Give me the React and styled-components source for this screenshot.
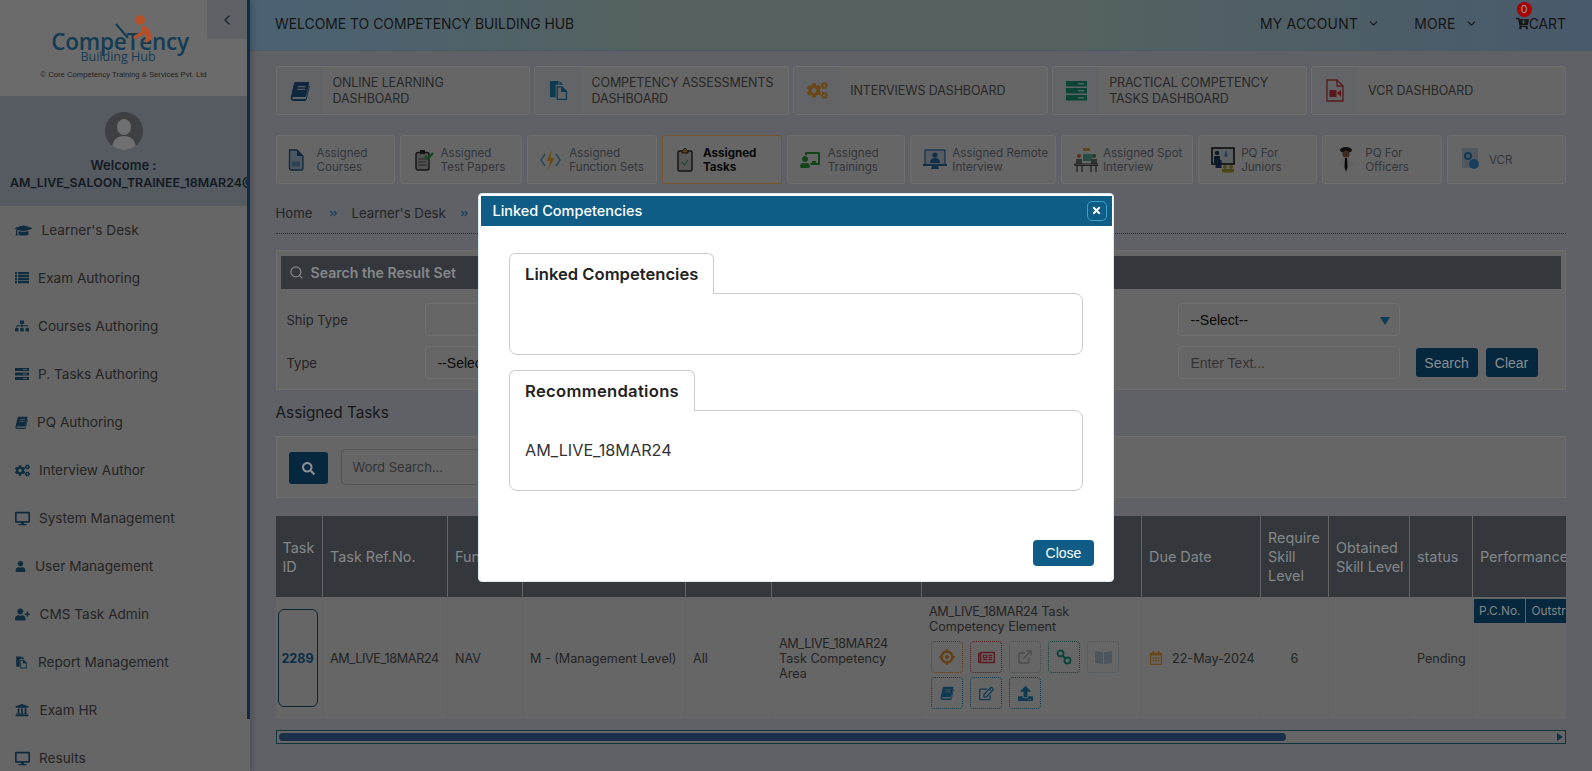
import React from "react";
import styled, { createGlobalStyle } from "styled-components";
import {
  FaGraduationCap, FaSitemap, FaCogs, FaDesktop, FaUser, FaUserPlus, FaUniversity,
  FaCartPlus, FaAngleDoubleRight, FaSearch, FaRegNewspaper, FaRegEdit, FaUpload,
  FaTimes, FaRegCalendarAlt, FaChalkboardTeacher
} from "react-icons/fa";
import { FiSearch, FiChevronDown, FiChevronLeft, FiExternalLink } from "react-icons/fi";

const sans = `Inter, "Open Sans", sans-serif`;
const arial = `"Liberation Sans", Arial, sans-serif`;

const GlobalStyle = createGlobalStyle`
  html, body { margin: 0; height: 771px; overflow: hidden; }
  * { box-sizing: border-box; }
  body { font-family: ${sans}; color: #1d1d1d; background: #5f6166; }
`;

const Page = styled.div`
  display: flex;
  height: 771px;
  overflow: hidden;
`;

/* the page behind the dialog is painted in its dimmed colours; icons keep
   their own colours and go through this filter */
const Dimmed = styled.span`
  display: inline-flex;
  align-items: center;
  justify-content: center;
  filter: brightness(0.44);
`;

/* ---- sidebar ---- */
const Sidebar = styled.aside`
  position: relative;
  flex: 0 0 250px;
  background: #666;
  box-shadow: 2px 0 6px rgba(0, 0, 0, 0.2);
  overflow: hidden;
  &::after {
    content: "";
    position: absolute;
    top: 0;
    right: 0;
    width: 3px;
    height: 719px;
    background: #0e2c48;
  }
`;

const LogoBlock = styled.div`
  position: relative;
  height: 96px;
  width: 247px;
  background: #6b6b6b;
  text-align: center;
`;

const LogoFigure = styled.svg`
  position: absolute;
  left: 112px;
  top: 12px;
`;

const LogoName = styled.div`
  padding: 29px 7px 0 0;
  font: 600 22.5px/26px "Open Sans", sans-serif;
  letter-spacing: -0.2px;
  color: #143c55;
`;

const LogoSub = styled.div`
  margin-top: -6px;
  padding-right: 11px;
  font: 400 12.5px/15px "Open Sans", sans-serif;
  color: #143c55;
`;

const LogoCopy = styled.div`
  margin-top: 6px;
  font: 400 7.7px/10px ${arial};
  color: #222;
`;

const CollapseButton = styled.div`
  position: absolute;
  top: 0;
  right: 0;
  width: 40px;
  height: 39px;
  display: flex;
  align-items: center;
  justify-content: center;
  background: #5e6165;
  color: #1a2430;
`;

const UserBlock = styled.div`
  width: 247px;
  height: 110px;
  padding-top: 16px;
  background: #555b61;
  text-align: center;
  white-space: nowrap;
  overflow: hidden;
`;

const Avatar = styled.svg`
  display: block;
  margin: 0 auto;
`;

const Welcome = styled.div`
  margin-top: 6px;
  font: 600 13px/18px ${sans};
  color: #141a22;
`;

const UserName = styled.div`
  font: 600 12.4px/18px ${sans};
  color: #141a22;
  text-align: left;
  padding-left: 10px;
`;

const MenuItem = styled.div`
  display: flex;
  align-items: center;
  height: 48px;
  padding-left: 15px;
  font: 400 13.6px/18px ${sans};
  color: #242424;
  white-space: nowrap;
`;

const MenuIcon = styled(Dimmed)`
  justify-content: flex-start;
  flex: 0 0 ${p => p.$width}px;
  color: #24668f;
`;

/* ---- main ---- */
const Main = styled.main`
  flex: 1;
  min-width: 0;
`;

const TopBar = styled.header`
  display: flex;
  align-items: center;
  height: 51px;
  padding: 0 26px 3px 25px;
  background: linear-gradient(90deg, #4a6274 0%, #556260 30%, #556260 60%, #485a6c 100%);
  border-bottom: 1px solid #4c5c66;
  font: 400 13.9px/18px ${sans};
  color: #151515;
  white-space: nowrap;
`;

const TopTitle = styled.div`
  flex: 1;
`;

const TopLink = styled.div`
  display: flex;
  align-items: center;
  gap: 9px;
  margin-left: ${p => p.$gap}px;
  letter-spacing: 0.25px;
`;

const Cart = styled.div`
  position: relative;
  display: flex;
  align-items: center;
  margin-left: 38px;
`;

const CartBadge = styled.span`
  position: absolute;
  left: 1px;
  top: -13px;
  width: 15px;
  height: 15px;
  border-radius: 50%;
  background: #a80000;
  color: #999;
  font: 400 11px/15px ${sans};
  text-align: center;
`;

const Content = styled.div`
  padding: 15px 26px 0 25.5px;
`;

const DashGrid = styled.div`
  display: grid;
  grid-template-columns: repeat(5, 1fr);
  gap: 4px;
`;

const DashCard = styled.div`
  display: flex;
  height: 49px;
  background: #666;
  border: 1px solid #6e6e6e;
  border-radius: 3px;
  overflow: hidden;
`;

const DashIcon = styled.div`
  flex: 0 0 46px;
  display: flex;
  align-items: center;
  justify-content: center;
  background: #626468;
`;

const DashLabel = styled.div`
  align-self: center;
  padding-left: 10px;
  font: 400 12.5px/16px ${sans};
  letter-spacing: -0.1px;
  color: #282828;
  white-space: nowrap;
`;

const TaskGrid = styled.div`
  display: grid;
  grid-template-columns: 119fr 122.6fr 129.5fr 119.6fr 118.5fr 145.5fr 132fr 119fr 119.5fr 119fr;
  gap: 5px;
  margin-top: 20px;
`;

const TaskCard = styled.div`
  display: flex;
  align-items: center;
  height: 49px;
  padding-left: ${p => p.$pad}px;
  gap: ${p => p.$gap}px;
  background: #666;
  border: 1px solid ${p => (p.$active ? "#78542a" : "#6e6e6e")};
  border-radius: 3px;
`;

const TaskLabel = styled.div`
  font: ${p => (p.$active ? 700 : 400)} 11.6px/14px ${sans};
  color: ${p => (p.$active ? "#080808" : "#33363b")};
  white-space: nowrap;
`;

const Breadcrumb = styled.nav`
  display: flex;
  align-items: flex-end;
  height: 50px;
  padding-bottom: 11px;
  border-bottom: 1px dotted #2a2a2a;
  font: 400 13.2px/18px ${sans};
  color: #242424;
`;

const Crumb = styled.span`
  margin-right: ${p => p.$gap}px;
`;

const CrumbSep = styled.span`
  display: flex;
  margin-bottom: 4px;
  color: #1f4360;
  margin-right: 13px;
`;

const Panel = styled.section`
  margin-top: ${p => p.$top}px;
  height: ${p => p.$height}px;
  padding: 5px 4px;
  background: #666;
  border: 1px solid #6e6e6e;
`;

const PanelHead = styled.div`
  display: flex;
  align-items: center;
  gap: 7px;
  height: 33px;
  padding-left: 8px;
  background: #34373b;
  font: 600 14.1px/18px ${sans};
  color: #85888b;
`;

const FilterRow = styled.div`
  display: grid;
  grid-template-columns: 138px 222px 1fr 222px 161.5px;
  align-items: center;
  height: 43px;
  padding-left: 6px;
  font: 400 13px/18px ${sans};
  color: #242424;
`;

const FilterRows = styled.div`
  margin-top: 9px;
`;

const Field = styled.div`
  position: relative;
  display: flex;
  align-items: center;
  height: 33px;
  padding-left: 12px;
  border: 1px solid #6f7072;
  border-radius: 4px;
  grid-column: ${p => p.$col};
  font: 400 14px/18px ${arial};
  color: ${p => (p.$placeholder ? "#333" : "#0a0a0a")};
`;

const SelectArrow = styled.span`
  position: absolute;
  right: 9px;
  top: 13px;
  border-left: 5px solid transparent;
  border-right: 5px solid transparent;
  border-top: 8px solid #0a3c54;
`;

const Buttons = styled.div`
  display: flex;
  gap: 8px;
  padding-left: 16px;
`;

const DarkButton = styled.div`
  display: flex;
  align-items: center;
  justify-content: center;
  width: ${p => p.$width}px;
  height: ${p => p.$height || 29}px;
  background: #05283e;
  border-radius: 3px;
  font: 400 14px/18px ${arial};
  color: #8a8f93;
`;

const SectionTitle = styled.h2`
  margin: 13px 0 14px;
  font: 400 15.3px/19px ${sans};
  color: #181818;
`;

const WordRow = styled.div`
  display: flex;
  align-items: center;
  gap: 13px;
  height: 36px;
  margin-top: 8px;
  padding-left: 8px;
`;

const WordInput = styled.div`
  display: flex;
  align-items: center;
  width: 300px;
  height: 36px;
  margin-top: -2px;
  padding-left: 11px;
  border: 1px solid #555;
  border-radius: 4px;
  font: 400 13px/18px ${sans};
  color: #333;
`;

/* ---- table ---- */
const TableWrap = styled.div`
  margin-top: 18px;
  overflow: hidden;
`;

const Table = styled.table`
  table-layout: fixed;
  width: 1400px;
  border-collapse: collapse;
`;

const Th = styled.th`
  width: ${p => p.$width}px;
  height: 81px;
  padding: 0 4px 0 7px;
  background: #34373b;
  border-right: 1px solid #646464;
  font: 400 14.4px/19px ${sans};
  color: #85888b;
  text-align: left;
  white-space: ${p => (p.$nowrap ? "nowrap" : "normal")};
`;

const Td = styled.td`
  height: 122px;
  padding: ${p => p.$padding || "0 7px"};
  background: #666;
  border-right: 1px dotted #606060;
  font: 400 12.6px/15px ${sans};
  color: #242424;
  vertical-align: ${p => p.$align || "middle"};
  text-align: ${p => (p.$center ? "center" : "left")};
`;

const Code = styled.span`
  letter-spacing: -0.35px;
`;

const IdBox = styled.div`
  display: flex;
  align-items: center;
  justify-content: center;
  width: 40px;
  height: 98px;
  margin-left: -5px;
  border: 1px solid #0d2533;
  border-radius: 6px;
  font: 700 12.6px/15px ${sans};
  color: #0a2e46;
`;

const DueDate = styled.div`
  display: flex;
  align-items: center;
  gap: 9px;
  white-space: nowrap;
`;

const ActionGrid = styled.div`
  display: flex;
  flex-wrap: wrap;
  gap: 4px 7px;
  margin-top: 7px;
  padding-left: 2px;
`;

const ActionButton = styled(Dimmed)`
  width: 32px;
  height: 32px;
  border: 1px dotted ${p => p.$color};
  border-radius: 4px;
  color: ${p => p.$color};
`;

const SubHead = styled.div`
  display: flex;
  white-space: nowrap;
`;

const SubCell = styled.div`
  height: 24px;
  padding: 0 5px;
  background: #05283e;
  border-right: 1px solid #646464;
  font: 400 11.8px/24px ${sans};
  color: #85888b;
`;

const ScrollTrack = styled.div`
  position: relative;
  height: 14px;
  margin-top: 11px;
  padding: 2px;
  background: #666;
  border: 1px solid #0d3540;
`;

const ScrollThumb = styled.div`
  width: 1007px;
  height: 8px;
  background: #1a2f4a;
  border-radius: 4px;
`;

const ScrollArrow = styled.span`
  position: absolute;
  right: 2px;
  top: 2px;
  border-top: 4px solid transparent;
  border-bottom: 4px solid transparent;
  border-left: 6px solid #0d3545;
`;

/* ---- modal ---- */
const Backdrop = styled.div`
  position: fixed;
  inset: 0;
  display: flex;
  justify-content: center;
  padding-top: 193px;
`;

const Dialog = styled.div`
  width: 636px;
  height: 389px;
  padding: 1.5px;
  background: #fff;
  border: 1px solid #dcebf2;
  border-radius: 4px;
`;

const DialogHead = styled.div`
  display: flex;
  align-items: center;
  justify-content: space-between;
  height: 30px;
  padding: 0 5px 0 12px;
  background: #0f5d87;
  font: 500 14.5px/18px ${sans};
  color: #fff;
`;

const DialogClose = styled.div`
  display: flex;
  align-items: center;
  justify-content: center;
  width: 20px;
  height: 20px;
  border: 1px solid #3aa2c8;
  border-radius: 5px;
  background: #0f5d87;
  color: #fff;
`;

const DialogBody = styled.div`
  padding: 27px 28.5px 0;
`;

const Tab = styled.div`
  position: relative;
  z-index: 1;
  display: inline-block;
  height: 41px;
  margin-bottom: -1px;
  padding: 0 15px;
  background: #fff;
  border: 1px solid #ccc;
  border-bottom: 0;
  border-radius: 6px 6px 0 0;
  font: 600 16.6px/40px ${sans};
  letter-spacing: ${p => p.$spacing || 0}px;
  color: #222;
`;

const TabBody = styled.div`
  display: flex;
  align-items: center;
  height: ${p => p.$height}px;
  margin-bottom: 15px;
  padding-left: 15px;
  border: 1px solid #ccc;
  border-radius: 0 8px 8px 8px;
  font: 400 16.2px/20px ${sans};
  color: #333;
`;

const DialogFoot = styled.div`
  display: flex;
  justify-content: flex-end;
  padding: 34px 17.5px 0 0;
`;

const CloseButton = styled.div`
  display: flex;
  align-items: center;
  justify-content: center;
  width: 61px;
  height: 26px;
  background: #0f5d87;
  border-radius: 4px;
  font: 400 14px/18px ${arial};
  color: #fff;
`;

/* ---- drawn icons ---- */
const BookIcon = ({ size = 14, color = "currentColor" }) => (
  <svg width={size} height={size} viewBox="0 0 20 20" fill={color}>
    <path d="M6 1h12.5c.6 0 .9.5.7 1.1l-3.2 13.2c-.1.5-.5.7-1 .7H3.4c-.8 0-1.1.8-.9 1.2.2.5.6.8 1.2.8h11.5c.5 0 .8-.3.9-.7L19 4.4l.8.8-3 12.9c-.2.9-1 1.9-2 1.9H3.6C1.6 20 .2 18 .8 16L3.9 2.7C4.1 1.8 5 1 6 1z" />
    <path d="M7.6 5h8v1.2h-8zM7 7.8h8V9H7z" fill="#ccc" />
  </svg>
);

const FilesIcon = ({ size = 14, color = "currentColor" }) => (
  <svg width={size} height={size} viewBox="0 0 20 22" fill={color}>
    <path d="M1 1h9v4H7v13H1z" />
    <path d="M8 6.500h6l5 5V21H8zm1.400 1.400v11.700h8.200v-7h-5V7.900z" />
    <path d="M11 1l4 4h-4z" />
  </svg>
);

const ListIcon = () => (
  <svg width="14" height="12" viewBox="0 0 14 12" fill="currentColor">
    {[0, 3, 6, 9].map(y => (
      <g key={y}>
        <rect y={y} width="2" height="2.300" />
        <rect x="3" y={y} width="11" height="2.300" />
      </g>
    ))}
  </svg>
);

const TaskBars = () => (
  <svg width="14" height="12" viewBox="0 0 14 12" fill="currentColor">
    <rect width="14" height="3" />
    <rect y="4.500" width="14" height="3" />
    <rect y="9" width="14" height="3" />
    <rect x="8" y="1" width="4" height="1" fill="#ccc" />
    <rect x="8" y="5.500" width="4" height="1" fill="#ccc" />
    <rect x="8" y="10" width="4" height="1" fill="#ccc" />
  </svg>
);

const ServerBars = () => (
  <svg width="21" height="21" viewBox="0 0 21 21">
    {[1, 8, 15].map(y => (
      <g key={y}>
        <rect x="0" y={y} width="21" height="5.500" fill="#1c9a80" />
        <rect x="12" y={y + 2.2} width="6" height="1.200" fill="#bfe" />
      </g>
    ))}
  </svg>
);

const VideoDoc = () => (
  <svg width="18" height="23" viewBox="0 0 18 23" fill="none">
    <path d="M1 1h10l6 6v15H1z" stroke="#c83a3a" strokeWidth="1.300" />
    <path d="M11 1v6h6" stroke="#c83a3a" strokeWidth="1.300" />
    <rect x="3.500" y="11" width="7" height="7" fill="#c83a3a" />
    <path d="M11 14l4-3v7z" fill="#c83a3a" />
  </svg>
);

const DocIcon = () => (
  <svg width="16" height="22" viewBox="0 0 16 22" fill="none">
    <path d="M1.500 1h7.500l6 6v12.500a1.500 1.500 0 0 1-1.500 1.500h-10.500a1.500 1.500 0 0 1-1.500-1.500z" fill="#a9c4dc" stroke="#245a8c" strokeWidth="1.300" />
    <path d="M9 1l6 6H9z" fill="#245a8c" />
    <rect x="4" y="12.500" width="8" height="5" fill="#6a96bc" />
  </svg>
);

const ClipCheckIcon = () => (
  <svg width="19" height="22" viewBox="0 0 19 22" fill="none">
    <rect x="1" y="3.500" width="13" height="17.500" rx="2" fill="#b8b8b8" stroke="#2e2e2e" strokeWidth="1.400" />
    <rect x="5" y="1" width="5" height="4" fill="#2e2e2e" />
    <path d="M3.500 10h8M3.500 13h8M3.500 16h8" stroke="#5a5a5a" strokeWidth="1.200" />
    <path d="M10 7l3 3 5-6" stroke="#28a040" strokeWidth="2" />
  </svg>
);

const FunctionIcon = () => (
  <svg width="21" height="22" viewBox="0 0 21 22" fill="none">
    <path d="M5 5l-4 6 4 6M16 5l4 6-4 6" stroke="#6a9cc4" strokeWidth="1.500" />
    <path d="M12 1l-5.500 11h3.500l-2 9 6.500-12h-4z" fill="#f0b020" />
  </svg>
);

const TaskClipIcon = () => (
  <svg width="16" height="25" viewBox="0 0 16 25" fill="none">
    <rect x="1" y="4" width="14" height="20" rx="1.500" fill="#c8c8c8" stroke="#2c2c2c" strokeWidth="1.500" />
    <path d="M5 4l3-3 3 3v2H5z" fill="#d88a30" stroke="#2c2c2c" />
    <path d="M5 15l2.500 3 3.500-5" stroke="#4aa878" strokeWidth="1.200" />
  </svg>
);

const RemoteIcon = () => (
  <svg width="24" height="22" viewBox="0 0 24 22" fill="none">
    <rect x="2" y="1" width="20" height="15" fill="#c6d2e0" stroke="#2a6aa8" strokeWidth="1.200" />
    <circle cx="12" cy="6" r="2.600" fill="#2a6aa8" />
    <path d="M7 14c0-4 2.500-5 5-5s5 1 5 5z" fill="#2a6aa8" />
    <path d="M0 15h24v2H0zM9 17h6l1 3H8z" fill="#2a6aa8" />
  </svg>
);

const SpotIcon = () => (
  <svg width="24" height="26" viewBox="0 0 24 26" fill="none">
    <rect x="9" y="1" width="7" height="3" fill="#d8a040" />
    <rect x="9" y="7" width="9" height="7" fill="#5ab0a0" />
    <circle cx="5" cy="9" r="2" fill="#c86a40" />
    <circle cx="20" cy="9" r="2" fill="#3a8060" />
    <path d="M2 12h6v5H2zM17 12h6v5h-6z" fill="#70786a" />
    <path d="M1 17h23v1.500H1zM3 18v7M8 18v7M17 18v7M22 18v7" stroke="#444" strokeWidth="1.200" />
  </svg>
);

const JuniorIcon = () => (
  <svg width="24" height="26" viewBox="0 0 24 26" fill="none">
    <rect x="1" y="1" width="22" height="16" fill="#d2dae2" stroke="#1c1c1c" strokeWidth="1.600" />
    <circle cx="6" cy="6" r="2.200" fill="#1c3a60" />
    <path d="M3 9h6v4h1.500v8H4.500v-5H3z" fill="#1c3a60" />
    <path d="M15 3l1.500 5a1.600 1.600 0 1 1-3 0z" fill="#4a90c8" />
    <circle cx="14" cy="20" r="2" fill="#a8a030" />
    <circle cx="20" cy="20" r="2" fill="#a8a030" />
    <rect x="11" y="22" width="12" height="3.500" fill="#a8a030" />
  </svg>
);

const OfficerIcon = () => (
  <svg width="20" height="28" viewBox="0 0 20 28" fill="none">
    <ellipse cx="10" cy="4" rx="6" ry="3" fill="#222" />
    <circle cx="10" cy="8" r="3.600" fill="#8a6040" />
    <path d="M2 19l5-7h6l5 7-2.500 1.500L13 17v6H7v-6l-2.500 3.500z" fill="#ddd" />
    <path d="M9 12h2l.5 9-1.500 5-1.500-5z" fill="#111" />
  </svg>
);

const VcrIcon = () => (
  <svg width="20" height="25" viewBox="0 0 20 25" fill="none">
    <rect x="1" y="1" width="16" height="20" rx="1" fill="#b8c8d8" />
    <circle cx="7" cy="9" r="3" stroke="#2a80c0" strokeWidth="2" />
    <circle cx="13" cy="17" r="5" fill="#3a90d0" />
  </svg>
);

const TargetIcon = () => (
  <svg width="16" height="16" viewBox="0 0 16 16" fill="none" stroke="#e09030">
    <circle cx="8" cy="8" r="5.500" strokeWidth="2.400" />
    <path d="M8 5.500l2.500 2.500L8 10.500 5.500 8z" fill="#e09030" stroke="none" />
    <path d="M8 0v3M8 13v3M0 8h3M13 8h3" strokeWidth="1.600" />
  </svg>
);

const ChainIcon = () => (
  <svg width="16" height="16" viewBox="0 0 16 16" fill="none" stroke="#1c9a86" strokeWidth="1.900">
    <circle cx="4.500" cy="4.500" r="3" />
    <circle cx="11.500" cy="11.500" r="3" />
    <path d="M6.500 6.500l3 3" />
  </svg>
);

const PanelIcon = () => (
  <svg width="17" height="14" viewBox="0 0 17 14" fill="currentColor">
    <path d="M0 1l8 1v12l-8-1zM9 2l8-1v12l-8 1z" />
  </svg>
);

const menu = [
  { label: "Learner's Desk", icon: <FaGraduationCap size={17} />, width: 26.5 },
  { label: "Exam Authoring", icon: <ListIcon />, width: 23 },
  { label: "Courses Authoring", icon: <FaSitemap size={14} />, width: 23 },
  { label: "P. Tasks Authoring", icon: <TaskBars />, width: 23 },
  { label: "PQ Authoring", icon: <BookIcon size={13} />, width: 22 },
  { label: "Interview Author", icon: <FaCogs size={15} />, width: 24 },
  { label: "System Management", icon: <FaDesktop size={15} />, width: 24 },
  { label: "User Management", icon: <FaUser size={11} />, width: 20 },
  { label: "CMS Task Admin", icon: <FaUserPlus size={15} />, width: 24.5 },
  { label: "Report Management", icon: <FilesIcon size={13} />, width: 23 },
  { label: "Exam HR", icon: <FaUniversity size={14} />, width: 24.5 },
  { label: "Results", icon: <FaDesktop size={15} />, width: 24 }
];

const dashboards = [
  { lines: ["ONLINE LEARNING", "DASHBOARD"], icon: <BookIcon size={20} color="#245a90" /> },
  { lines: ["COMPETENCY ASSESSMENTS", "DASHBOARD"], icon: <FilesIcon size={21} color="#1f86ba" /> },
  { lines: ["INTERVIEWS DASHBOARD"], icon: <FaCogs size={21} color="#f0a030" /> },
  { lines: ["PRACTICAL COMPETENCY", "TASKS DASHBOARD"], icon: <ServerBars /> },
  { lines: ["VCR DASHBOARD"], icon: <VideoDoc /> }
];

const tasks = [
  { lines: ["Assigned", "Courses"], icon: <DocIcon />, pad: 11, gap: 13 },
  { lines: ["Assigned", "Test Papers"], icon: <ClipCheckIcon />, pad: 14, gap: 7 },
  { lines: ["Assigned", "Function Sets"], icon: <FunctionIcon />, pad: 12, gap: 8 },
  { lines: ["Assigned", "Tasks"], icon: <TaskClipIcon />, pad: 14, gap: 10, active: true },
  { lines: ["Assigned", "Trainings"], icon: <FaChalkboardTeacher size={20} color="#2e9a3a" />, pad: 12, gap: 8 },
  { lines: ["Assigned Remote", "Interview"], icon: <RemoteIcon />, pad: 12, gap: 5 },
  { lines: ["Assigned Spot", "Interview"], icon: <SpotIcon />, pad: 12, gap: 5 },
  { lines: ["PQ For", "Juniors"], icon: <JuniorIcon />, pad: 12, gap: 6 },
  { lines: ["PQ For", "Officers"], icon: <OfficerIcon />, pad: 13, gap: 9 },
  { lines: ["VCR"], icon: <VcrIcon />, pad: 13, gap: 8 }
];

const columns = [
  { label: "Task ID", width: 47 },
  { label: "Task Ref.No.", width: 125 },
  { label: "Function", width: 75 },
  { label: "Level", width: 163 },
  { label: "Type", width: 86 },
  { label: "Task Competency Area", width: 150 },
  { label: "Task Competency Element", width: 220 },
  { label: "Due Date", width: 119 },
  { label: "Require Skill Level", width: 68 },
  { label: "Obtained Skill Level", width: 81 },
  { label: "status", width: 63 },
  { label: "Performance", width: 203, nowrap: true }
];

const actions = [
  { color: "#e09030", icon: <TargetIcon /> },
  { color: "#d03848", icon: <FaRegNewspaper size={17} /> },
  { color: "#a8acb0", icon: <FiExternalLink size={16} /> },
  { color: "#1c9a86", icon: <ChainIcon /> },
  { color: "#b0c4d4", icon: <PanelIcon /> },
  { color: "#1f86ba", icon: <BookIcon size={14} /> },
  { color: "#1f86ba", icon: <FaRegEdit size={15} /> },
  { color: "#1f86ba", icon: <FaUpload size={15} /> }
];

const App = () => (
  <>
    <GlobalStyle />
    <Page>
      <Sidebar>
        <LogoBlock>
          <LogoFigure width="50" height="38" viewBox="0 0 50 38" fill="none">
            <path d="M4 12l12 14" stroke="#143c55" strokeWidth="2" />
            <circle cx="28" cy="8" r="5" fill="#b5502a" />
            <path d="M30 14c7 0 10 6 9 14l-5 3-1-9-10 5c-2 0-2-2-1-3l8-5z" fill="#b5502a" />
          </LogoFigure>
          <LogoName>CompeTency</LogoName>
          <LogoSub>Building Hub</LogoSub>
          <LogoCopy>© Core Competency Training &amp; Services Pvt. Ltd</LogoCopy>
          <CollapseButton><FiChevronLeft size={16} /></CollapseButton>
        </LogoBlock>
        <UserBlock>
          <Avatar width="38" height="38" viewBox="0 0 38 38">
            <defs><clipPath id="avatarClip"><circle cx="19" cy="19" r="19" /></clipPath></defs>
            <circle cx="19" cy="19" r="19" fill="#3e4043" />
            <g clipPath="url(#avatarClip)" fill="#707070">
              <ellipse cx="19" cy="15" rx="7" ry="8" />
              <path d="M7 38c0-10 5-14 12-14s12 4 12 14z" />
            </g>
          </Avatar>
          <Welcome>Welcome :</Welcome>
          <UserName>AM_LIVE_SALOON_TRAINEE_18MAR24@</UserName>
        </UserBlock>
        {menu.map(item => (
          <MenuItem key={item.label}>
            <MenuIcon $width={item.width}>{item.icon}</MenuIcon>
            {item.label}
          </MenuItem>
        ))}
      </Sidebar>

      <Main>
        <TopBar>
          <TopTitle>WELCOME TO COMPETENCY BUILDING HUB</TopTitle>
          <TopLink $gap={0}>MY ACCOUNT <FiChevronDown size={13} /></TopLink>
          <TopLink $gap={34}>MORE <FiChevronDown size={13} /></TopLink>
          <Cart>
            <FaCartPlus size={13} />
            <CartBadge>0</CartBadge>
            <span>CART</span>
          </Cart>
        </TopBar>

        <Content>
          <DashGrid>
            {dashboards.map(d => (
              <DashCard key={d.lines.join()}>
                <DashIcon><Dimmed>{d.icon}</Dimmed></DashIcon>
                <DashLabel>
                  {d.lines.map(line => <div key={line}>{line}</div>)}
                </DashLabel>
              </DashCard>
            ))}
          </DashGrid>

          <TaskGrid>
            {tasks.map(t => (
              <TaskCard key={t.lines.join()} $pad={t.pad} $gap={t.gap} $active={t.active}>
                <Dimmed>{t.icon}</Dimmed>
                <TaskLabel $active={t.active}>
                  {t.lines.map(line => <div key={line}>{line}</div>)}
                </TaskLabel>
              </TaskCard>
            ))}
          </TaskGrid>

          <Breadcrumb>
            <Crumb $gap={17}>Home</Crumb>
            <CrumbSep><FaAngleDoubleRight size={9} /></CrumbSep>
            <Crumb $gap={14}>Learner's Desk</Crumb>
            <CrumbSep><FaAngleDoubleRight size={9} /></CrumbSep>
            <Crumb $gap={0}>Assigned Tasks</Crumb>
          </Breadcrumb>

          <Panel $top={16} $height={140}>
            <PanelHead><FiSearch size={15} /> Search the Result Set</PanelHead>
            <FilterRows>
              <FilterRow>
                <span>Ship Type</span>
                <Field />
                <Field $col={4}>--Select--<SelectArrow /></Field>
              </FilterRow>
              <FilterRow>
                <span>Type</span>
                <Field>--Select--</Field>
                <Field $col={4} $placeholder>Enter Text...</Field>
                <Buttons>
                  <DarkButton $width={62}>Search</DarkButton>
                  <DarkButton $width={52}>Clear</DarkButton>
                </Buttons>
              </FilterRow>
            </FilterRows>
          </Panel>

          <SectionTitle>Assigned Tasks</SectionTitle>

          <Panel $top={0} $height={62}>
            <WordRow>
              <DarkButton $width={39} $height={32}><FaSearch size={13} /></DarkButton>
              <WordInput>Word Search...</WordInput>
            </WordRow>
          </Panel>

          <TableWrap>
            <Table>
              <thead>
                <tr>
                  {columns.map(c => (
                    <Th key={c.label} $width={c.width} $nowrap={c.nowrap}>{c.label}</Th>
                  ))}
                </tr>
              </thead>
              <tbody>
                <tr>
                  <Td><IdBox>2289</IdBox></Td>
                  <Td><Code>AM_LIVE_18MAR24</Code></Td>
                  <Td>NAV</Td>
                  <Td>M - (Management Level)</Td>
                  <Td>All</Td>
                  <Td><Code>AM_LIVE_18MAR24</Code> Task Competency Area</Td>
                  <Td $align="top" $padding="7px 7px 0">
                    <Code>AM_LIVE_18MAR24</Code> Task Competency Element
                    <ActionGrid>
                      {actions.map((a, i) => (
                        <ActionButton key={i} $color={a.color}>{a.icon}</ActionButton>
                      ))}
                    </ActionGrid>
                  </Td>
                  <Td>
                    <DueDate>
                      <Dimmed><FaRegCalendarAlt size={14} color="#f0a030" /></Dimmed>
                      22-May-2024
                    </DueDate>
                  </Td>
                  <Td $center>6</Td>
                  <Td />
                  <Td>Pending</Td>
                  <Td $align="top" $padding="2px 0 0 1px">
                    <SubHead>
                      <SubCell>P.C.No.</SubCell>
                      <SubCell>Outstripping</SubCell>
                    </SubHead>
                  </Td>
                </tr>
              </tbody>
            </Table>
          </TableWrap>

          <ScrollTrack>
            <ScrollThumb />
            <ScrollArrow />
          </ScrollTrack>
        </Content>
      </Main>
    </Page>

    <Backdrop>
      <Dialog>
        <DialogHead>
          Linked Competencies
          <DialogClose><FaTimes size={11} /></DialogClose>
        </DialogHead>
        <DialogBody>
          <Tab>Linked Competencies</Tab>
          <TabBody $height={62} />
          <Tab $spacing={0.3}>Recommendations</Tab>
          <TabBody $height={81}>AM_LIVE_18MAR24</TabBody>
        </DialogBody>
        <DialogFoot><CloseButton>Close</CloseButton></DialogFoot>
      </Dialog>
    </Backdrop>
  </>
);

export default App;
